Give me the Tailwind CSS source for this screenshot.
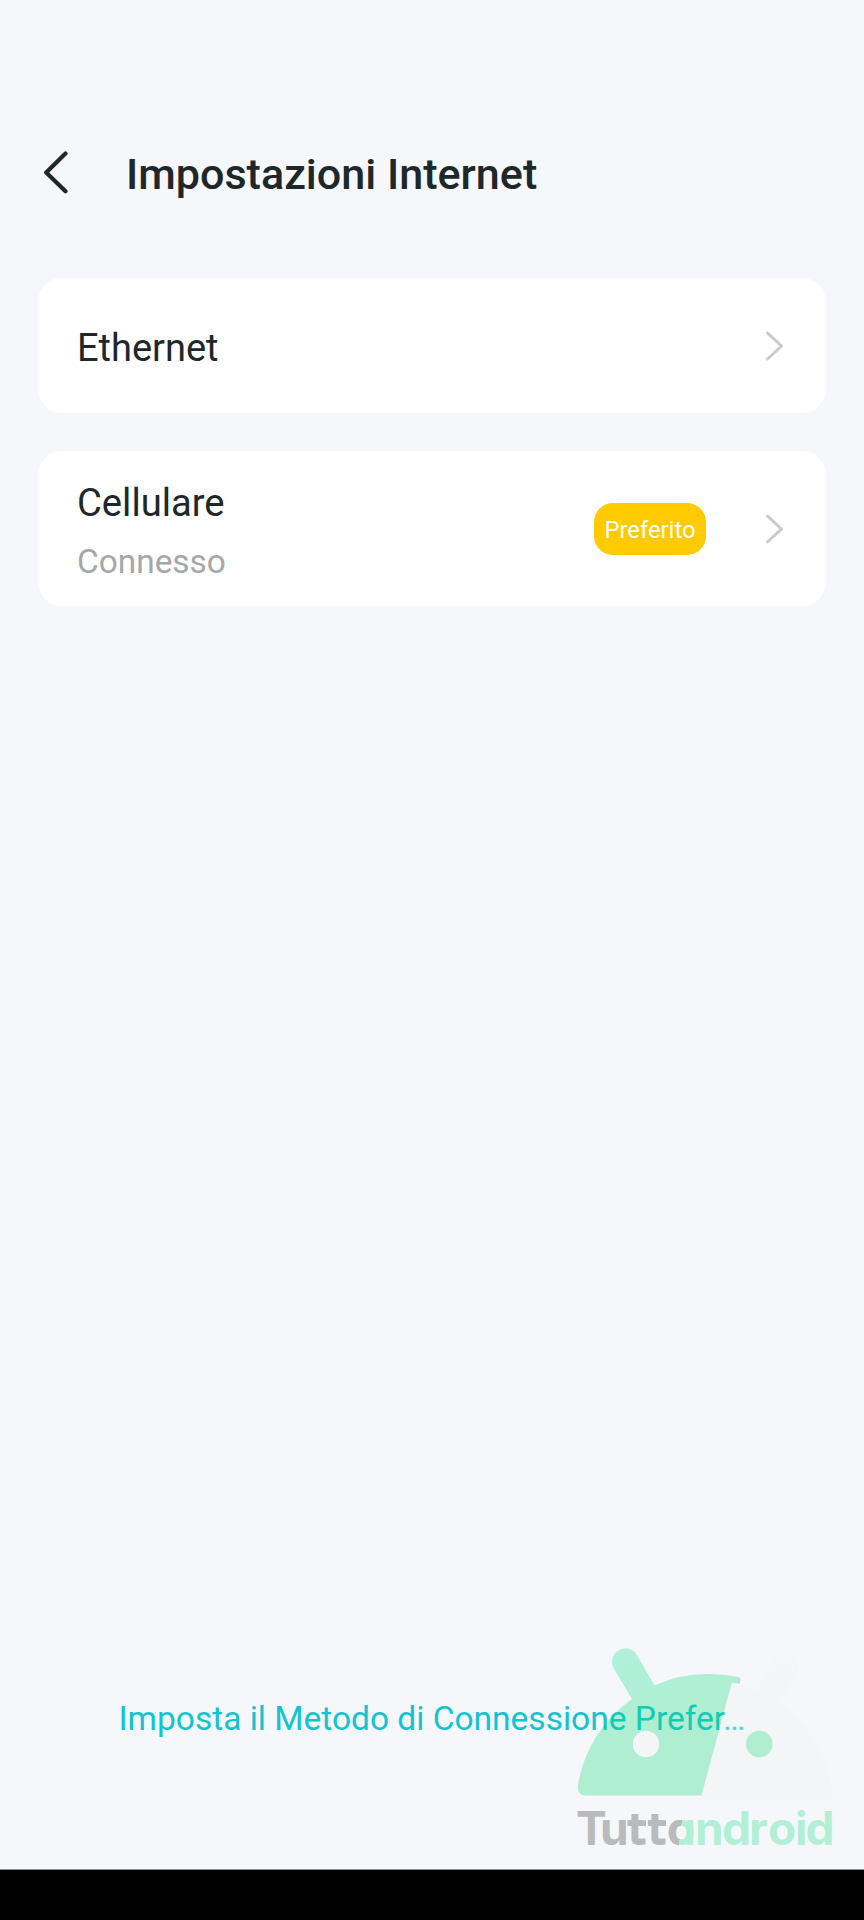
<!DOCTYPE html>
<html lang="it">
<head>
<meta charset="utf-8">
<title>Impostazioni Internet</title>
<script src="https://cdn.jsdelivr.net/npm/@tailwindcss/browser@4"></script>
</head>
<body class="bg-[#f5f7fb]">
<div class="relative flex h-[1920px] w-[864px] flex-col overflow-hidden bg-[#f5f7fb] font-['Roboto',sans-serif] text-[#1e272a]">
  <header class="flex h-[278px] items-start pt-[150px] pl-[43px]">
    <svg class="mt-px h-[43px] w-[26px] shrink-0" viewBox="0 0 26 43" fill="none" stroke="#1e272a" stroke-width="4.2" stroke-linecap="round" stroke-linejoin="round"><path d="M22.500 2.600 3.200 21.500 22.500 40.300"/></svg>
    <h1 class="ml-[57px] text-[43.100px] leading-[50px] font-medium whitespace-nowrap">Impostazioni Internet</h1>
  </header>
  <main class="flex flex-col gap-[38px] pr-[38px] pl-[38px]">
    <section class="flex h-[135px] items-center justify-between rounded-[24px] bg-white pr-[42px] pl-[39px]">
      <span class="mt-[5px] text-[38px] leading-[46px]">Ethernet</span>
      <svg class="h-[30px] w-[19px]" viewBox="0 0 19 30" fill="none" stroke="#c9cacb" stroke-width="3" stroke-linecap="round" stroke-linejoin="round"><path d="M2.500 2 16.500 15 2.500 28"/></svg>
    </section>
    <section class="flex h-[155px] items-center rounded-[24px] bg-white pr-[42px] pl-[39px]">
      <div class="mt-[4px] flex flex-1 flex-col gap-[16px]">
        <span class="text-[38.200px] leading-[46px]">Cellulare</span>
        <span class="text-[33.400px] leading-[40px] text-[#a5a8a9]">Connesso</span>
      </div>
      <span class="mr-[59px] flex h-[52px] w-[112px] items-center justify-center rounded-[19px] bg-[#ffcb00] pt-[3px] text-[23.800px] leading-[28px] text-white">Preferito</span>
      <svg class="h-[30px] w-[19px]" viewBox="0 0 19 30" fill="none" stroke="#c9cacb" stroke-width="3" stroke-linecap="round" stroke-linejoin="round"><path d="M2.500 2 16.500 15 2.500 28"/></svg>
    </section>
  </main>
  <footer class="mt-auto flex flex-col">
    <p class="mb-[128px] pl-[118.500px] text-[33.500px] leading-[44px] whitespace-nowrap text-[#12c4d2]">Imposta il Metodo di Connessione Prefer…</p>
    <div class="h-[51px] border-t border-[#8d9293] bg-black"></div>
  </footer>

  <!-- Watermark floating over the page -->
  <svg class="absolute top-[1640px] left-[568px] h-[220px] w-[280px]" viewBox="568 1640 280 220">
    <defs>
      <linearGradient id="g" x1="0" y1="0" x2="0.600" y2="1"><stop offset="0" stop-color="#12e4a0"/><stop offset="0.550" stop-color="#12dc74"/></linearGradient>
      <linearGradient id="s" x1="0" y1="0" x2="0.300" y2="1"><stop offset="0" stop-color="#f6f6f6"/><stop offset="0.500" stop-color="#f1f1ec"/></linearGradient>
      <linearGradient id="w" gradientUnits="userSpaceOnUse" x1="672" y1="1819" x2="692" y2="1821.500"><stop offset="0.500" stop-color="#b9babb"/><stop offset="0.500" stop-color="#b1f0d5"/></linearGradient>
    </defs>
    <g opacity="0.3">
      <path fill="url(#s)" fill-rule="evenodd" d="M731.800 1682.700Q744 1685 757 1690.500L773.500 1659A13.300 13.300 0 0 1 796.500 1672L779 1703A130 130 0 0 1 832.500 1791Q833 1801 823 1801H700L701.500 1795.500ZM759.300 1730.700a13.300 13.300 0 1 0 0.010 0Z"/>
      <path fill="url(#g)" fill-rule="evenodd" d="M701.500 1795.500H585.500Q577 1795.500 577.800 1786A130 130 0 0 1 632 1699L613.800 1668.500A13.300 13.300 0 0 1 636.800 1655L654.500 1685.500Q692 1668 739 1677.300Q741 1678 740.500 1680L739.700 1684L731.800 1682.700ZM646 1731a13.100 13.100 0 1 0 0.010 0Z"/>
      <circle cx="646" cy="1744" r="13.100" fill="#f1f1ec"/>
      <circle cx="759.300" cy="1744" r="13.300" fill="#12dc74"/>
    </g>
    <path fill="#b9babb" d="M627.500 1820.300H646V1826H627.500ZM648 1820.300H666V1826H648ZM635 1838.500H645.500V1844.500H637ZM655 1838.500H665.500V1844.500H657Z"/>
    <text class="font-['Inter',sans-serif] text-[46px] font-bold [font-feature-settings:'cv11']" fill="url(#w)" x="576 600 627.500 647.500 667 667 695 722 749 768 795 805.500" y="1844.500">Tuttoandroid</text>
  </svg>
</div>
</body>
</html>
